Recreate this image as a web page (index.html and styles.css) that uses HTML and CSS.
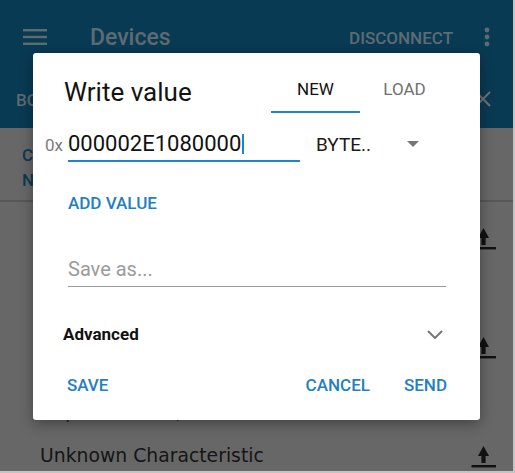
FILE: index.html
```html
<!DOCTYPE html>
<html>
<head>
<meta charset="utf-8">
<link rel="stylesheet" href="styles.css">
</head>
<body>
<div class="screen">
  <div class="appbar">
    <svg class="hamburger" width="24" height="18" viewBox="0 0 24 18"><rect x="0" y="1" width="24" height="2.4"/><rect x="0" y="7.8" width="24" height="2.4"/><rect x="0" y="14.6" width="24" height="2.4"/></svg>
    <div class="app-title">Devices</div>
    <div class="app-action">DISCONNECT</div>
    <svg class="kebab" width="6" height="20" viewBox="0 0 6 20"><circle cx="3" cy="3" r="2.4"/><circle cx="3" cy="10" r="2.4"/><circle cx="3" cy="17" r="2.4"/></svg>
  </div>
  <div class="tabbar">
    <div class="tab-label">BO</div>
    <svg class="close" width="16" height="16" viewBox="0 0 16 16"><path d="M1 1L15 15M15 1L1 15"/></svg>
  </div>
  <div class="service">
    <div class="service-name">C</div>
    <div class="service-uuid">N</div>
  </div>
  <div class="list">
    <div class="item">
      <div class="item-row"><span class="item-name"></span><svg class="upload" width="26" height="22" viewBox="0 0 26 22"><path d="M12.5 0L18 10H14.6V17H10.4V10H7Z"/><rect x="0.5" y="19" width="24.5" height="2.4"/></svg></div>
      <div class="item-gap"></div>
      <div class="item-props">Properties: READ, WRITE</div>
    </div>
    <div class="item">
      <div class="item-row"><span class="item-name"></span><svg class="upload" width="26" height="22" viewBox="0 0 26 22"><path d="M12.5 0L18 10H14.6V17H10.4V10H7Z"/><rect x="0.5" y="19" width="24.5" height="2.4"/></svg></div>
      <div class="item-gap"></div>
      <div class="item-props">Properties: READ, WRITE</div>
    </div>
    <div class="item">
      <div class="item-row"><span class="item-name">Unknown Characteristic</span><svg class="upload" width="26" height="22" viewBox="0 0 26 22"><path d="M12.5 0L18 10H14.6V17H10.4V10H7Z"/><rect x="0.5" y="19" width="24.5" height="2.4"/></svg></div>
    </div>
  </div>

  <div class="dialog">
    <div class="dlg-head">
      <div class="dlg-title">Write value</div>
      <div class="tabs">
        <div class="tab active">NEW</div>
        <div class="tab">LOAD</div>
      </div>
    </div>
    <div class="value-row">
      <div class="prefix">0x</div>
      <div class="value-input">000002E1080000<span class="cursor"></span></div>
      <div class="type-select">
        <span class="type-text">BYTE..</span>
        <span class="triangle"></span>
      </div>
    </div>
    <div class="add-value">ADD VALUE</div>
    <div class="save-field">Save as...</div>
    <div class="advanced">
      <span class="adv-label">Advanced</span>
      <svg class="chevron" width="16" height="9" viewBox="0 0 16 9"><path d="M1 1L8 8L15 1"/></svg>
    </div>
    <div class="actions">
      <span class="btn">SAVE</span>
      <span class="btn btn-cancel">CANCEL</span>
      <span class="btn btn-send">SEND</span>
    </div>
  </div>
</div>
</body>
</html>
```

FILE: styles.css
```css
html, body {
  margin: 0;
  padding: 0;
  background: #c4c4c4;
}
body {
  width: 515px;
  height: 473px;
  overflow: hidden;
  font-family: Roboto, "Liberation Sans", sans-serif;
}
.screen {
  position: relative;
  width: 513px;
  height: 471px;
  background: #676767;
  overflow: hidden;
}
.appbar {
  height: 74px;
  background: #093a54;
  display: flex;
  align-items: center;
  color: #5e6b71;
}
.hamburger {
  fill: #5e6b71;
  margin-left: 23px;
}
.app-title {
  margin-left: 43px;
  font-size: 23px;
  font-weight: 500;
  margin-top: 1px;
}
.app-action {
  margin-left: auto;
  font-size: 17px;
  font-weight: 500;
  margin-top: 1px;
}
.kebab {
  fill: #5e6b71;
  margin-left: 31px;
  margin-right: 23px;
}
.tabbar {
  height: 54px;
  background: #093a54;
  display: flex;
  align-items: center;
  color: #5e6b71;
}
.tab-label {
  margin-left: 16px;
  font-size: 17px;
  font-weight: 500;
  margin-top: -2px;
}
.close {
  margin-left: auto;
  margin-right: 22px;
  margin-top: -4px;
  stroke: #6a7378;
  stroke-width: 2;
  fill: none;
}
.service {
  height: 74px;
  box-sizing: border-box;
  padding: 15px 0 0 22px;
  color: #0a3a55;
  font-size: 17px;
  font-weight: 500;
  line-height: 25px;
  border-bottom: 2px solid #575757;
}
.list {
  display: flex;
  flex-direction: column;
}
.item {
  height: 109px;
  box-sizing: border-box;
  padding: 22px 16px 0 40px;
  color: #151515;
  font-family: "DejaVu Sans", sans-serif;
}
.item-row {
  display: flex;
  align-items: center;
  height: 26px;
}
.item-name {
  font-size: 18.8px;
}
.upload {
  margin-left: auto;
  fill: #111;
  margin-top: 4px;
}
.item-gap {
  height: 40px;
}
.item-props {
  font-size: 16px;
  line-height: 30px;
}

/* dialog */
.dialog {
  position: absolute;
  left: 33px;
  top: 53px;
  width: 447px;
  height: 367px;
  background: #fff;
  border-radius: 3px;
  box-shadow: 0 4px 14px rgba(0,0,0,0.35);
  color: #161616;
}
.dlg-head {
  display: flex;
  height: 60px;
}
.dlg-title {
  margin: 24px 0 0 31px;
  font-size: 26px;
  line-height: 30px;
  color: #131313;
}
.tabs {
  display: flex;
  margin-left: auto;
  margin-right: 31px;
}
.tab {
  width: 89px;
  height: 60px;
  box-sizing: border-box;
  padding-top: 14px;
  border-bottom: 2px solid transparent;
  display: flex;
  align-items: center;
  justify-content: center;
  font-size: 17px;
  color: #707070;
}
.tab.active {
  color: #111;
  border-bottom-color: #1f85c8;
}
.value-row {
  display: flex;
  align-items: flex-start;
  height: 36px;
  margin-top: 13px;
  padding-left: 12px;
}
.prefix {
  width: 23px;
  font-size: 17px;
  line-height: 36px;
  padding-top: 1px;
  color: #7a7a7a;
}
.value-input {
  width: 232px;
  height: 36px;
  box-sizing: border-box;
  padding-top: 1px;
  border-bottom: 2px solid #1f85c8;
  font-size: 22px;
  line-height: 34px;
  color: #111;
  display: flex;
  align-items: center;
}
.cursor {
  display: inline-block;
  width: 2px;
  height: 20px;
  background: #1f85c8;
  margin-left: 1px;
  margin-top: 1px;
}
.type-select {
  display: flex;
  align-items: center;
  height: 36px;
  margin-left: 16px;
}
.type-text {
  font-size: 19px;
  color: #1a1a1a;
}
.triangle {
  width: 0;
  height: 0;
  border-left: 6px solid transparent;
  border-right: 6px solid transparent;
  border-top: 6px solid #777;
  margin-left: 36px;
}
.add-value {
  margin-top: 28px;
  padding-left: 35px;
  font-size: 17px;
  font-weight: 500;
  line-height: 27px;
  color: #1f80c2;
}
.save-field {
  margin: 35px 0 0 35px;
  width: 378px;
  height: 35px;
  box-sizing: border-box;
  border-bottom: 1px solid #9a9a9a;
  font-size: 20px;
  line-height: 34px;
  color: #9b9b9b;
}
.advanced {
  display: flex;
  align-items: center;
  height: 40px;
  margin-top: 27px;
  padding: 0 37px 0 30px;
}
.adv-label {
  font-size: 17px;
  font-weight: 700;
  color: #111;
}
.chevron {
  margin-left: auto;
  fill: none;
  stroke: #777;
  stroke-width: 2;
}
.actions {
  display: flex;
  align-items: center;
  height: 40px;
  margin-top: 11px;
  padding: 0 33px 0 34px;
}
.btn {
  font-size: 17px;
  font-weight: 500;
  color: #1f80c2;
}
.btn-cancel {
  margin-left: auto;
}
.btn-send {
  margin-left: 34px;
}
```
